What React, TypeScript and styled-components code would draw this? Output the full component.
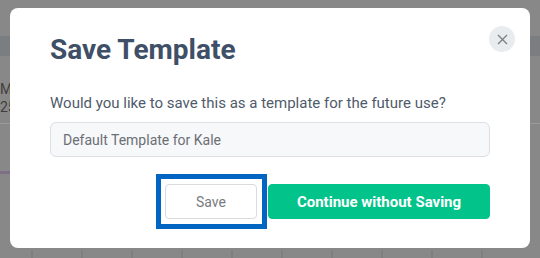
import React, { useState } from "react";
import styled, { createGlobalStyle } from "styled-components";

const GlobalStyle = createGlobalStyle`
  html, body {
    margin: 0;
    padding: 0;
    width: 540px;
    height: 258px;
    overflow: hidden;
    font-family: Roboto, "Liberation Sans", sans-serif;
  }
`;

const Page = styled.div`
  position: relative;
  width: 540px;
  height: 258px;
  background-color: #888888;
  overflow: hidden;
`;

const Backdrop = styled.div`
  display: flex;
  flex-direction: column;
  padding-top: 36px;
`;

const HeaderBand = styled.div`
  height: 20px;
  background-color: #7b7e81;
`;

const Cell = styled.div`
  padding-top: 24px;
  height: 43px;
  font-size: 14px;
  line-height: 18px;
  color: #3f3f3f;
  border-bottom: 1px solid #9a9a9a;
`;

const AccentLine = styled.div`
  margin-top: 47px;
  width: 10px;
  height: 3px;
  background-color: #7e6f86;
`;

const GridRow = styled.div`
  display: flex;
  margin-top: 76px;
  padding-left: 31px;
  height: 12px;
  gap: 48px;
`;

const GridLine = styled.span`
  width: 2px;
  height: 100%;
  background-color: #7f7f7f;
`;

const Modal = styled.div`
  position: absolute;
  left: 10px;
  top: 8px;
  width: 520px;
  height: 240px;
  box-sizing: border-box;
  padding: 25px 40px 0;
  background-color: #ffffff;
  border-radius: 8px;
  display: flex;
  flex-direction: column;
`;

const CloseButton = styled.button`
  position: absolute;
  top: 18px;
  right: 15px;
  width: 26px;
  height: 26px;
  padding: 0;
  border: none;
  border-radius: 50%;
  background-color: #e9ecef;
  display: grid;
  place-items: center;
  cursor: pointer;
`;

const Title = styled.h1`
  margin: 0;
  font-size: 28px;
  line-height: 34px;
  font-weight: 700;
  color: #3e4f67;
`;

const Question = styled.p`
  margin: 26px 0 0;
  font-size: 15px;
  line-height: 20px;
  color: #4f5b6b;
`;

const NameInput = styled.input`
  margin-top: 9px;
  height: 35px;
  box-sizing: border-box;
  padding: 0 12px;
  border: 1px solid #dcdfe4;
  border-radius: 6px;
  background-color: #f7f8fa;
  font-family: inherit;
  font-size: 14px;
  color: #6b6f75;
  outline: none;
`;

const Actions = styled.div`
  display: flex;
  justify-content: flex-end;
  gap: 11px;
  margin-top: 27px;
`;

const Button = styled.button<{ $primary?: boolean; $focused?: boolean }>`
  position: relative;
  height: 35px;
  box-sizing: border-box;
  border-radius: 4px;
  font-family: inherit;
  cursor: pointer;
  outline: none;
  border: 1px solid ${(p) => (p.$primary ? "#02c38a" : "#d9dbde")};
  background-color: ${(p) => (p.$primary ? "#02c38a" : "#ffffff")};
  color: ${(p) => (p.$primary ? "#ffffff" : "#777b80")};
  font-size: ${(p) => (p.$primary ? "15px" : "14px")};
  font-weight: ${(p) => (p.$primary ? 700 : 400)};
  width: ${(p) => (p.$primary ? "222px" : "92px")};

  &::after {
    content: "";
    display: ${(p) => (p.$focused ? "block" : "none")};
    position: absolute;
    left: -10px;
    right: -11px;
    top: -11px;
    bottom: -11px;
    border: 5px solid #0066c2;
  }
`;

const App = () => {
  const [name, setName] = useState("Default Template for Kale");

  return (
    <Page>
      <GlobalStyle />
      <Backdrop>
        <HeaderBand />
        <Cell>
          MO
          <br />
          25
        </Cell>
        <AccentLine />
        <GridRow>
          {Array.from({ length: 10 }).map((_, i) => (
            <GridLine key={i} />
          ))}
        </GridRow>
      </Backdrop>
      <Modal>
        <CloseButton aria-label="Close">
          <svg width="11" height="11" viewBox="0 0 11 11">
            <path d="M1 1L10 10M10 1L1 10" stroke="#7a7d82" strokeWidth="1.3" fill="none" />
          </svg>
        </CloseButton>
        <Title>Save Template</Title>
        <Question>Would you like to save this as a template for the future use?</Question>
        <NameInput value={name} onChange={(e) => setName(e.target.value)} />
        <Actions>
          <Button $focused>Save</Button>
          <Button $primary>Continue without Saving</Button>
        </Actions>
      </Modal>
    </Page>
  );
};

export default App;
